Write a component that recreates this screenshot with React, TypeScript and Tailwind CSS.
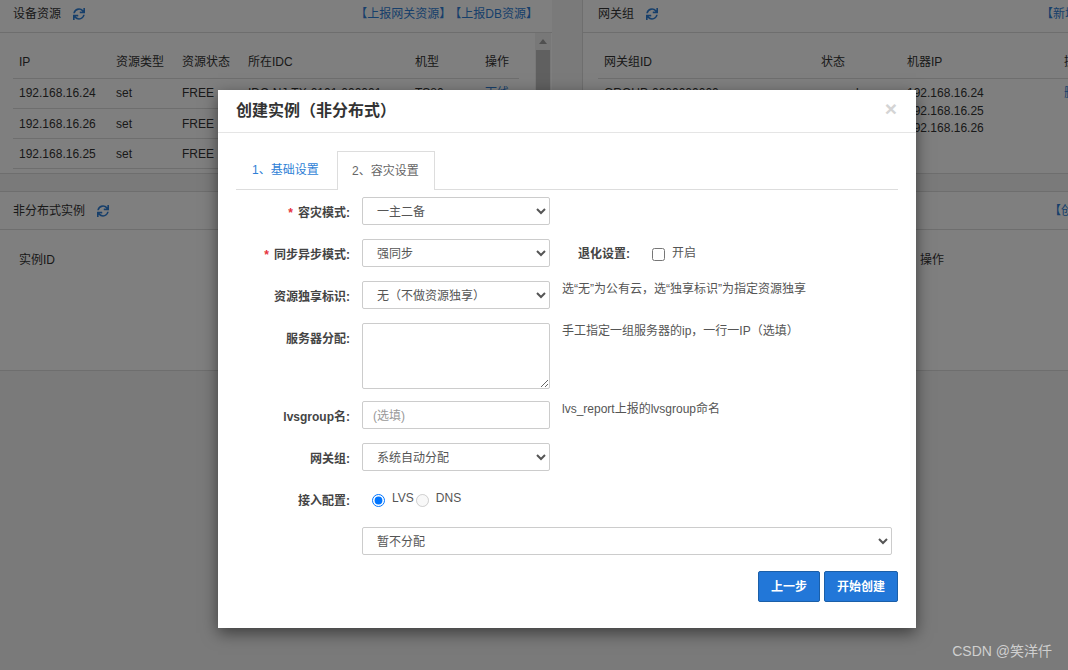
import React from "react";
import { FaSync } from "react-icons/fa";

const font = "font-['Liberation_Sans','Noto_Sans_CJK_SC',sans-serif]";

function PanelHeader({ title, children, className = "" }: { title: string; children?: React.ReactNode; className?: string }) {
  return (
    <div className={`flex items-center justify-between border-b border-[#ddd] ${className}`}>
      <div className="flex items-center gap-[12px] text-[#333]">
        <span>{title}</span>
        <FaSync className="text-[12px] text-[#2f7fd6]" />
      </div>
      {children}
    </div>
  );
}

const leftRows = [
  ["192.168.16.24", "set", "FREE", "IDC-NJ-TX-0101-000001", "TS80", "下线"],
  ["192.168.16.26", "set", "FREE", "IDC-NJ-TX-0101-000002", "TS80", "下线"],
  ["192.168.16.25", "set", "FREE", "IDC-NJ-TX-0101-000003", "TS80", "下线"],
];

function LeftCells({ cells, blueLast }: { cells: string[]; blueLast?: boolean }) {
  return (
    <>
      <div className="w-[97px] shrink-0">{cells[0]}</div>
      <div className="w-[66px] shrink-0">{cells[1]}</div>
      <div className="w-[66px] shrink-0">{cells[2]}</div>
      <div className="w-[167px] shrink-0">{cells[3]}</div>
      <div className="w-[70px] shrink-0">{cells[4]}</div>
      <div className={blueLast ? "text-[#2f7fd6]" : ""}>{cells[5]}</div>
    </>
  );
}

function Field({ label, required, children, className = "" }: { label: string; required?: boolean; children: React.ReactNode; className?: string }) {
  return (
    <div className={`flex items-start gap-[12px] ${className}`}>
      <label className="w-[114px] shrink-0 pt-[8px] text-right font-bold leading-4 text-[#444]">
        {required && <span className="mr-[5px] text-[#e6323c]">*</span>}
        {label}
      </label>
      {children}
    </div>
  );
}

const controlCls = "h-[28px] rounded-[2px] border border-[#ccc] bg-white pl-[10px] pt-[2px] text-[12px] text-[#555] outline-none";

function Sel({ value, wide }: { value: string; wide?: boolean }) {
  return (
    <select defaultValue={value} className={`${controlCls} ${wide ? "w-[530px]" : "w-[188px]"} shrink-0`}>
      <option>{value}</option>
    </select>
  );
}

function Hint({ children }: { children: React.ReactNode }) {
  return <div className="leading-4 text-[#555]">{children}</div>;
}

export default function App() {
  return (
    <div className={`relative h-[670px] w-[1068px] overflow-hidden bg-[#f4f4f4] text-[12px] leading-4 ${font}`}>
      {/* Page behind the dialog */}
      <div className="flex h-[174px]">
        <section className="h-full w-[552px] shrink-0 border-b border-[#ddd] bg-white">
          <PanelHeader title="设备资源" className="h-[33px] pb-[5px] pl-[13px] pr-[14px]">
            <div className="flex text-[#2f7fd6]">
              <span>【上报网关资源】</span>
              <span className="ml-[-2px]">【上报DB资源】</span>
            </div>
          </PanelHeader>
          <div className="flex">
            <div className="w-[519px] shrink-0 pl-[13px] pt-[18px]">
              <div className="flex h-[28px] w-[506px] items-start border-b border-[#ddd] pl-[6px] pt-[3px] text-[#333]">
                <LeftCells cells={["IP", "资源类型", "资源状态", "所在IDC", "机型", "操作"]} />
              </div>
              {leftRows.map((r, i) => (
                <div key={r[0]} className={`flex h-[30px] w-[506px] items-center border-b border-[#ddd] pl-[6px] text-[#333] ${i === 0 ? "pb-[2px]" : ""}`}>
                  <LeftCells cells={r} blueLast />
                </div>
              ))}
            </div>
            <div className="ml-[16px] flex h-[140px] w-[16px] flex-col items-center bg-[#f1f1f1]">
              <div className="mt-[6px] h-0 w-0 border-x-[4px] border-b-[5px] border-x-transparent border-b-[#a0a0a0]" />
              <div className="mt-[6px] h-[70px] w-[14px] bg-[#c1c1c1]" />
            </div>
          </div>
        </section>
        <section className="ml-[30px] h-full w-[600px] shrink-0 border-b border-l border-[#ddd] bg-white">
          <PanelHeader title="网关组" className="h-[33px] pb-[5px] pl-[15px]">
            <span className="mr-[57px] text-[#2f7fd6]">【新增网关组】</span>
          </PanelHeader>
          <div className="pl-[15px] pt-[18px] text-[#333]">
            <div className="flex h-[28px] items-start border-b border-[#ddd] pl-[6px] pt-[3px]">
              <div className="w-[217px] shrink-0">网关组ID</div>
              <div className="w-[86px] shrink-0">状态</div>
              <div className="w-[157px] shrink-0">机器IP</div>
              <div>操作</div>
            </div>
            <div className="flex pl-[6px] pt-[6px]">
              <div className="w-[217px] shrink-0">GROUP-0000000000</div>
              <div className="w-[86px] shrink-0 pl-[35px]">l</div>
              <div className="w-[157px] shrink-0">
                <div className="leading-[17.5px]">192.168.16.24</div>
                <div className="leading-[17.5px]">192.168.16.25</div>
                <div className="leading-[17.5px]">192.168.16.26</div>
              </div>
              <div className="text-[#2f7fd6]">删除</div>
            </div>
          </div>
        </section>
      </div>

      <section className="mt-[17px] h-[180px] border-y border-[#ddd] bg-white">
        <PanelHeader title="非分布式实例" className="h-[38px] pl-[13px]">
          <span className="mr-[-53px] text-[#2f7fd6]">【创建实例】</span>
        </PanelHeader>
        <div className="flex pl-[19px] pt-[22px] text-[#333]">
          <div className="w-[901px] shrink-0">实例ID</div>
          <div>操作</div>
        </div>
      </section>

      {/* Backdrop */}
      <div className="absolute inset-0 bg-black/50" />

      {/* Dialog */}
      <div className="absolute left-[218px] top-[90px] w-[698px] bg-white shadow-[0_5px_15px_rgba(0,0,0,0.5)]">
        <div className="flex h-[43px] items-center justify-between border-b border-[#e5e5e5] pb-[1px] pl-[18px] pr-[19px]">
          <h4 className="text-[16px] font-bold leading-5 text-[#333]">创建实例（非分布式）</h4>
          <span className="mb-[4px] text-[21px] font-bold leading-none text-[#d4d4d4]">×</span>
        </div>

        <div className="px-[18px] pb-[26px] pt-[18px]">
          <div className="flex h-[39px] border-b border-[#ddd]">
            <div className="flex h-[38px] w-[101px] items-center pl-[16px] text-[#2f7fd6]">1、基础设置</div>
            <div className="flex h-[39px] w-[98px] items-center border border-b-0 border-[#ddd] bg-white pl-[14px] text-[#666]">2、容灾设置</div>
          </div>

          <div className="mt-[7px] flex flex-col gap-[14px]">
            <Field label="容灾模式:" required>
              <Sel value="一主二备" />
            </Field>
            <Field label="同步异步模式:" required>
              <Sel value="强同步" />
              <div className="flex items-center pt-[7px]">
                <span className="ml-[16px] font-bold text-[#444]">退化设置:</span>
                <input type="checkbox" className="ml-[22px] h-[13px] w-[13px]" />
                <span className="ml-[7px] mt-[-2px] text-[#555]">开启</span>
              </div>
            </Field>
            <Field label="资源独享标识:">
              <Sel value="无（不做资源独享）" />
              <Hint>选“无”为公有云，选“独享标识”为指定资源独享</Hint>
            </Field>
            <Field label="服务器分配:">
              <textarea className="h-[66px] w-[188px] shrink-0 rounded-[2px] border border-[#ccc] bg-white outline-none" />
              <Hint>手工指定一组服务器的ip，一行一IP（选填）</Hint>
            </Field>
            <Field label="lvsgroup名:" className="mt-[-2px]">
              <input
                placeholder="(选填)"
                className="h-[28px] w-[188px] shrink-0 rounded-[2px] border border-[#ccc] bg-white px-[10px] pt-[2px] text-[12px] text-[#555] outline-none placeholder:text-[#999]"
              />
              <Hint>lvs_report上报的lvsgroup命名</Hint>
            </Field>
            <Field label="网关组:">
              <Sel value="系统自动分配" />
            </Field>
            <Field label="接入配置:" className="h-[28px]">
              <div className="flex items-center pl-[10px] pt-[9px] text-[#555]">
                <input type="radio" name="access" defaultChecked className="h-[13px] w-[13px]" />
                <span className="ml-[7px] mt-[-6px]">LVS</span>
                <input type="radio" name="access" disabled className="ml-[2px] h-[13px] w-[13px]" />
                <span className="ml-[7px] mt-[-6px]">DNS</span>
              </div>
            </Field>
            <div className="flex pl-[126px]">
              <Sel value="暂不分配" wide />
            </div>
          </div>

          <div className="mt-[16px] flex justify-end gap-[4px]">
            <button className="h-[31px] w-[62px] rounded-[2px] border border-[#1b5fa8] bg-[#2277d8] font-bold text-white">上一步</button>
            <button className="h-[31px] w-[74px] rounded-[2px] border border-[#1b5fa8] bg-[#2277d8] font-bold text-white">开始创建</button>
          </div>
        </div>
      </div>

      <div className="absolute bottom-[9px] right-[16px] text-[14px] leading-5 text-[#cfcfcf]">CSDN @笑洋仟</div>
    </div>
  );
}
